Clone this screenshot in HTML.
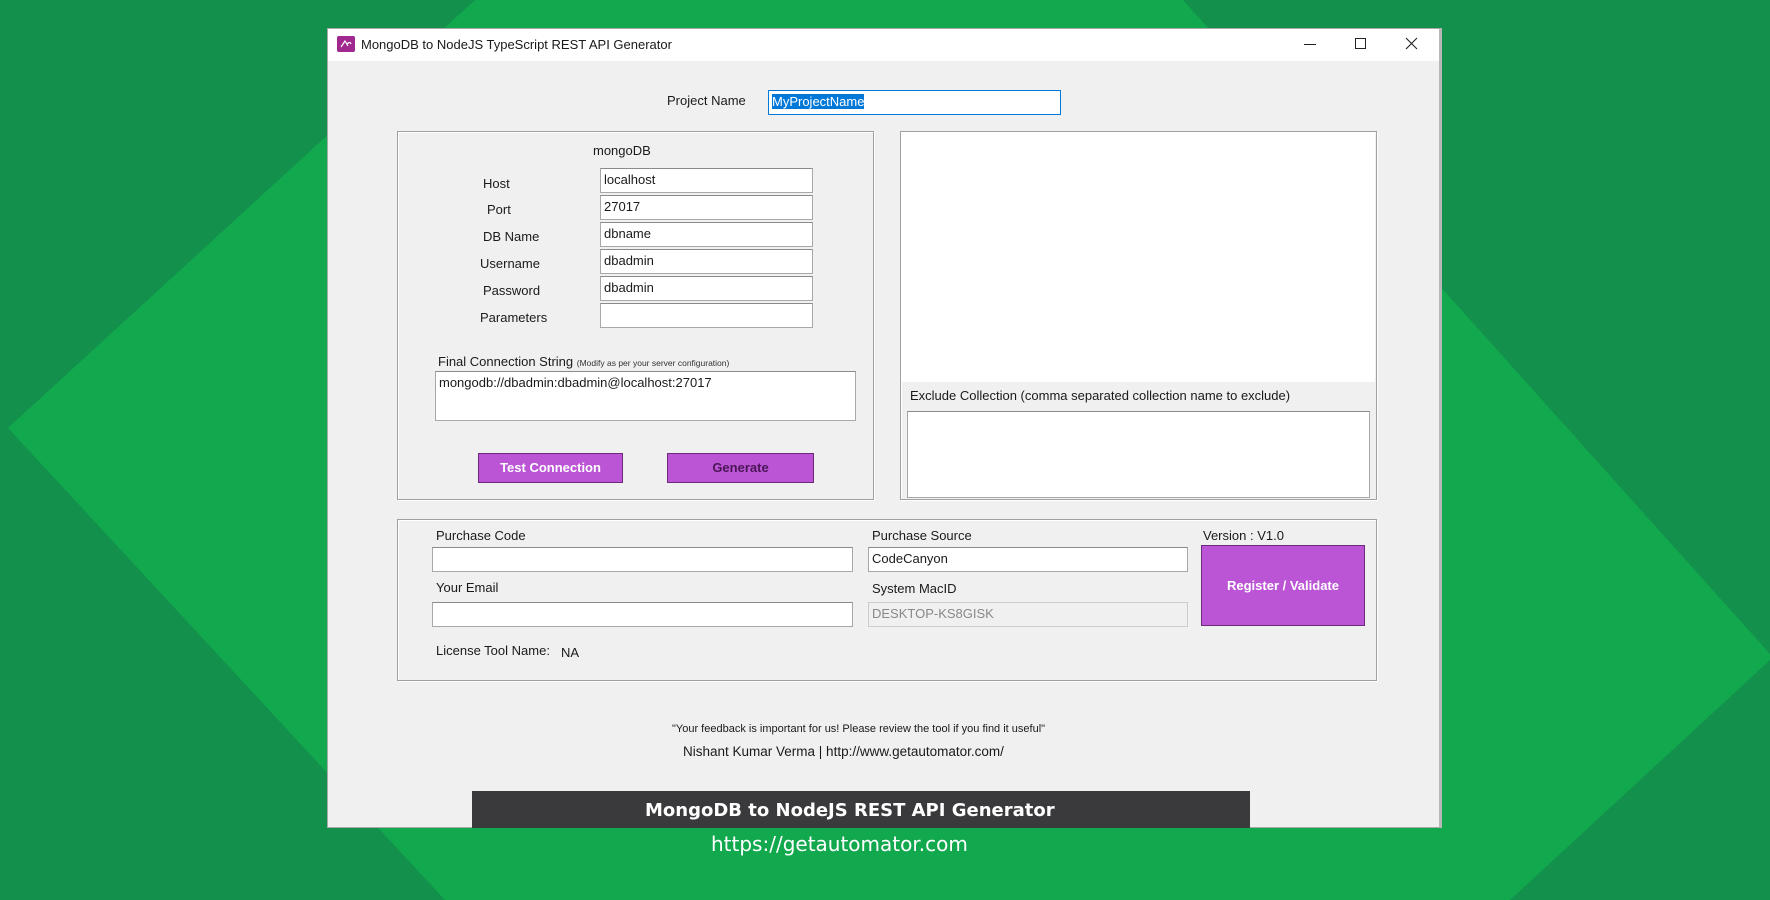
<!DOCTYPE html>
<html><head><meta charset="utf-8"><style>
*{margin:0;padding:0;box-sizing:border-box}
body{width:1770px;height:900px;overflow:hidden;background:#13904c;position:relative;font-family:"Liberation Sans",sans-serif;font-size:13px;color:#1a1a1a}
.a{position:absolute;white-space:nowrap}
.in{position:absolute;background:#fff;border:1px solid #a8a8a8;border-top-color:#8a8a8a;padding:3px 3px 2px;font-size:13px}
.grp{position:absolute;border:1px solid #a0a0a0;box-shadow:inset 1px 1px 0 #fff, 1px 1px 0 #fff}
.btn{position:absolute;background:#bb55d6;border:1px solid #6b2a7a;font-weight:bold;text-align:center;font-size:13px}
</style></head><body>
<svg class="a" style="left:0;top:0" width="1770" height="900"><polygon points="475,0 1183,0 1770,654 1770,660 1510,900 445,900 8,428" fill="#12a94e"/></svg>

<div class="a" style="left:327px;top:28px;width:1115px;height:800px;background:#f0f0f0;border:1px solid #a8a8a8;border-right:3px solid #b8b8b8"></div>
<div class="a" style="left:328px;top:29px;width:1111px;height:32px;background:#fff"></div>
<div class="a" style="left:337px;top:36px;width:18px;height:16px;background:#a0288f;border-radius:2px"></div>
<svg class="a" style="left:339px;top:38px" width="14" height="12"><path d="M2 9 L6 3 L9 8 M8 6 Q11 3 12 6" stroke="#fff" stroke-width="1.2" fill="none"/></svg>
<div class="a" style="left:361px;top:37px;font-size:13px">MongoDB to NodeJS TypeScript REST API Generator</div>
<div class="a" style="left:1304px;top:44px;width:12px;height:1px;background:#222"></div>
<div class="a" style="left:1355px;top:38px;width:11px;height:11px;border:1px solid #222"></div>
<svg class="a" style="left:1405px;top:37px" width="13" height="13"><path d="M1 1L12 12M12 1L1 12" stroke="#222" stroke-width="1.1"/></svg>

<div class="a" style="left:667px;top:93px">Project Name</div>
<div class="in" style="left:768px;top:90px;width:293px;height:25px;border:1px solid #0078d7"><span style="background:#0078d7;color:#fff">MyProjectName</span></div>

<div class="grp" style="left:397px;top:131px;width:477px;height:369px"></div>
<div class="a" style="left:593px;top:143px">mongoDB</div>
<div class="a" style="left:483px;top:176px">Host</div>
<div class="a" style="left:487px;top:202px">Port</div>
<div class="a" style="left:483px;top:229px">DB Name</div>
<div class="a" style="left:480px;top:256px">Username</div>
<div class="a" style="left:483px;top:283px">Password</div>
<div class="a" style="left:480px;top:310px">Parameters</div>
<div class="in" style="left:600px;top:168px;width:213px;height:25px">localhost</div>
<div class="in" style="left:600px;top:195px;width:213px;height:25px">27017</div>
<div class="in" style="left:600px;top:222px;width:213px;height:25px">dbname</div>
<div class="in" style="left:600px;top:249px;width:213px;height:25px">dbadmin</div>
<div class="in" style="left:600px;top:276px;width:213px;height:25px">dbadmin</div>
<div class="in" style="left:600px;top:303px;width:213px;height:25px"></div>
<div class="a" style="left:438px;top:354px">Final Connection String <span style="font-size:8.5px;color:#333">(Modify as per your server configuration)</span></div>
<div class="in" style="left:435px;top:371px;width:421px;height:50px">mongodb://dbadmin:dbadmin@localhost:27017</div>
<div class="btn" style="left:478px;top:453px;width:145px;height:30px;line-height:28px;color:#fff">Test Connection</div>
<div class="btn" style="left:667px;top:453px;width:147px;height:30px;line-height:28px;color:#4a1656">Generate</div>

<div class="grp" style="left:900px;top:131px;width:477px;height:369px"></div>
<div class="a" style="left:902px;top:133px;width:473px;height:249px;background:#fff"></div>
<div class="a" style="left:910px;top:388px">Exclude Collection (comma separated collection name to exclude)</div>
<div class="in" style="left:907px;top:411px;width:463px;height:87px"></div>

<div class="grp" style="left:397px;top:519px;width:980px;height:162px"></div>
<div class="a" style="left:436px;top:528px">Purchase Code</div>
<div class="in" style="left:432px;top:547px;width:421px;height:25px"></div>
<div class="a" style="left:436px;top:580px">Your Email</div>
<div class="in" style="left:432px;top:602px;width:421px;height:25px"></div>
<div class="a" style="left:872px;top:528px">Purchase Source</div>
<div class="in" style="left:868px;top:547px;width:320px;height:25px">CodeCanyon</div>
<div class="a" style="left:872px;top:581px">System MacID</div>
<div class="in" style="left:868px;top:602px;width:320px;height:25px;background:#f0f0f0;border-color:#ccc;color:#888">DESKTOP-KS8GISK</div>
<div class="a" style="left:1203px;top:528px">Version : V1.0</div>
<div class="btn" style="left:1201px;top:545px;width:164px;height:81px;line-height:79px;color:#fff">Register / Validate</div>
<div class="a" style="left:436px;top:643px">License Tool Name:</div>
<div class="a" style="left:561px;top:645px">NA</div>

<div class="a" style="left:672px;top:723px;font-size:11px">"Your feedback is important for us! Please review the tool if you find it useful"</div>
<div class="a" style="left:683px;top:744px;font-size:13.5px">Nishant Kumar Verma | http://www.getautomator.com/</div>

<div class="a" style="left:472px;top:791px;width:778px;height:37px;background:#3a3a3c;color:#fff;font-family:'DejaVu Sans',sans-serif;font-weight:bold;font-size:18px;line-height:39px;padding-left:173px">MongoDB to NodeJS REST API Generator</div>
<div class="a" style="left:472px;top:832px;width:950px;text-align:left;padding-left:239px;color:#fff;font-family:'DejaVu Sans',sans-serif;font-size:20px">https://getautomator.com</div>
</body></html>
